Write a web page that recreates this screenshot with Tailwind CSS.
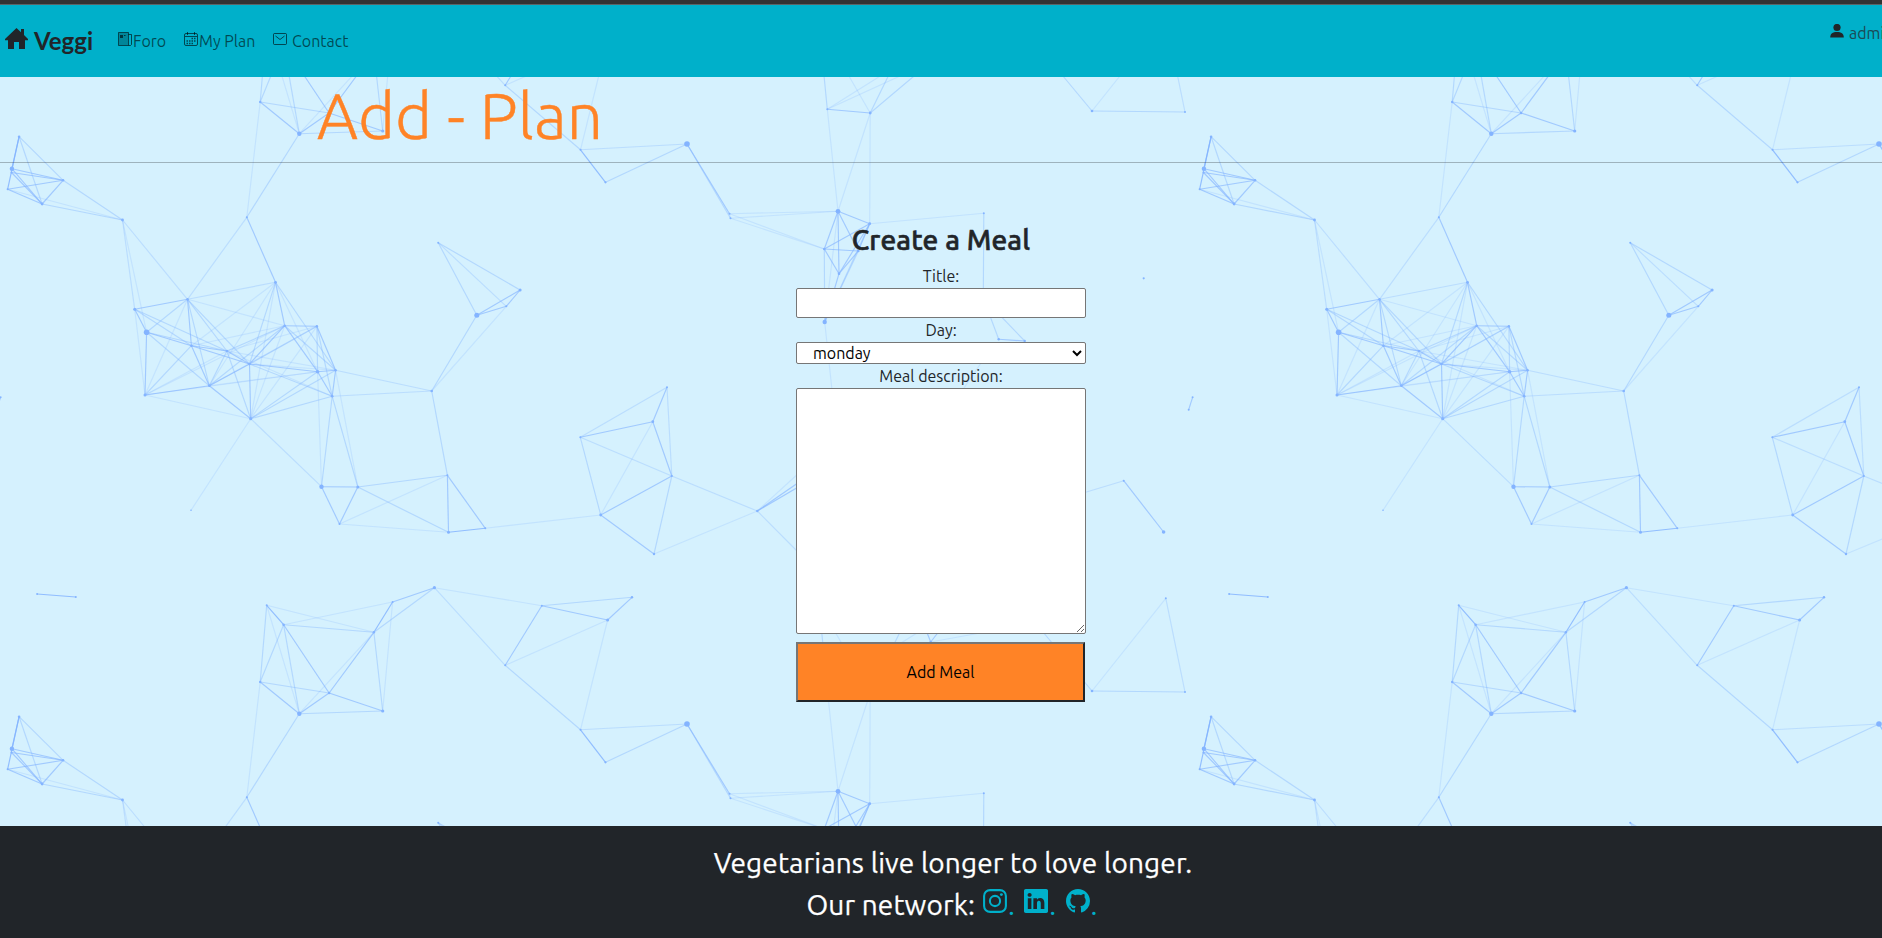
<!DOCTYPE html>
<html lang="en">
<head>
<meta charset="utf-8">
<title>Veggi</title>
<script src="https://cdn.jsdelivr.net/npm/@tailwindcss/browser@4"></script>
</head>
<body class="relative h-[938px] w-full overflow-hidden bg-[#d5f1fe] font-['Ubuntu','Open_Sans',sans-serif] text-base text-[#212529] flex flex-col">
  <!-- Decorative node network, tiled every 1192 x 580 -->
  <svg class="absolute inset-0 -z-10" width="1882" height="938" viewBox="0 0 1882 938" fill="none" stroke="#84b4ff" stroke-width="1.15">
    <g id="net"></g>
    <use href="#net" x="1192"/><use href="#net" y="-580"/><use href="#net" x="1192" y="-580"/>
    <use href="#net" x="-1192"/>
    <use href="#net" y="580"/><use href="#net" x="1192" y="580"/>
  </svg>

  <div class="h-[5px] shrink-0 border-b border-[#5c6466] bg-[#333]"></div>
  <nav class="flex h-[72px] shrink-0 items-start bg-[#00b0ca] pl-[5px] whitespace-nowrap">
    <a class="flex pt-[20px]">
      <svg class="mt-[3px]" width="23" height="21" viewBox="0 0 23 21" fill="#212529"><path d="M11.5 0 16 4.2V1h3v6L23 11v1.2h-3V21h-6v-7H9v7H3v-8.800H0V11z"/></svg>
      <span class="ml-[6px] w-[84px] font-['Lato',sans-serif] text-[24px] leading-[32px] font-bold">Veggi</span>
    </a>
    <a class="flex w-[66px] pt-[24px] leading-6 text-black/60">
      <svg class="mt-[3px] mr-[1px]" width="14" height="14" viewBox="0 0 14 14" fill="none" stroke="currentColor"><path d="M.5.5h10v13h-10zM10.500 2.500h3v10l-1 1h-2" /><path d="M1 1h9v12H1z" fill="currentColor" fill-opacity=".4" stroke="none"/><path d="M2 3h3v3H2zM6 3h1.500v1H6z" fill="currentColor" stroke="none"/></svg>
      <span>Foro</span>
    </a>
    <a class="flex w-[89px] pt-[24px] leading-6 text-black/60">
      <svg class="mt-[3px] mr-[1px]" width="14" height="14" viewBox="0 0 14 14" fill="none" stroke="currentColor"><rect x=".5" y="1.500" width="13" height="12" rx="1.500"/><path d="M1 4.500h12M3.500 0v3M10.500 0v3"/><path d="M7.500 6.500h4M2.500 9h9M2.500 11.500h6.500" stroke-width="1.500" stroke-dasharray="1.500 1"/></svg>
      <span>My Plan</span>
    </a>
    <a class="flex pt-[24px] leading-6 text-black/60">
      <svg class="mt-[4px] mr-[5px]" width="14" height="12" viewBox="0 0 14 12" fill="none" stroke="currentColor"><rect x=".5" y=".5" width="13" height="11" rx="1"/><path d="m2.500 3 4.500 3.500L11.500 3"/></svg>
      <span>Contact</span>
    </a>
    <a class="ml-auto flex pt-[16px] leading-6 text-[#1d4a54]">
      <svg class="mt-[3px] mr-[5px]" width="14" height="14" viewBox="0 0 14 14" fill="#212529"><circle cx="7" cy="3.500" r="3.600"/><path d="M.2 13.500c0-4 2.500-5.600 6.800-5.600s6.800 1.600 6.800 5.600z"/></svg>
      <span class="w-[33px]">admi</span>
    </a>
  </nav>

  <h1 class="h-[86px] shrink-0 border-b border-[#212529]/30 pl-[317px] text-[64px] leading-[77px] font-light tracking-[0.1px] text-[#ff8326] [-webkit-text-stroke:0.4px_#ff8326]">Add - Plan</h1>

  <main class="flex h-[663px] shrink-0 flex-col items-center pt-[60px]">
    <h3 class="mb-[7px] text-[28px] leading-[34px] font-medium tracking-[0.15px] [-webkit-text-stroke:0.6px_#212529]">Create a Meal</h3>
    <form class="flex w-[290px] flex-col text-center leading-6">
      <label>Title:</label>
      <input class="h-[30px] rounded-[2px] border border-[#767676] bg-white" type="text">
      <label>Day:</label>
      <select class="h-[22px] rounded-[2px] border border-[#767676] bg-white pl-[12px] text-left leading-5 text-black"><option>monday</option></select>
      <label>Meal description:</label>
      <textarea class="h-[246px] resize rounded-[2px] border border-[#767676] bg-white"></textarea>
      <button class="mt-2 h-[60px] w-[289px] border-2 border-t-[#767676] border-r-[#212529] border-b-[#212529] border-l-[#767676] bg-[#ff8326] text-black" type="button">Add Meal</button>
    </form>
  </main>

  <footer class="h-[112px] shrink-0 bg-[#212529] pt-[16px] pl-6 text-center text-[28px] leading-[42px] text-white">
    <p class="tracking-[0.13px] [-webkit-text-stroke:0.25px_#fff]">Vegetarians live longer to love longer.</p>
    <div class="flex justify-center">
      <span class="tracking-[0.13px] [-webkit-text-stroke:0.25px_#fff]">Our network:</span>
      <a class="ml-[8px] flex w-[41.300px] text-[#00b0ca]"><svg class="mt-[5px] mr-[1px]" width="24" height="24" viewBox="0 0 24 24" fill="none" stroke="currentColor" stroke-width="2.100"><rect x="1.100" y="1.100" width="21.800" height="21.800" rx="6"/><circle cx="12" cy="12" r="5.100"/><circle cx="18.400" cy="5.600" r="1.450" fill="currentColor" stroke="none"/></svg>.</a>
      <a class="flex w-[41.300px] text-[#00b0ca]"><svg class="mt-[5px] mr-[1px]" width="24" height="24" viewBox="0 0 16 16" fill="currentColor"><path d="M0 1.146C0 .513.526 0 1.175 0h13.650C15.474 0 16 .513 16 1.146v13.708c0 .633-.526 1.146-1.175 1.146H1.175C.526 16 0 15.487 0 14.854zm4.943 12.248V6.169H2.542v7.225zm-1.200-8.212c.837 0 1.358-.554 1.358-1.248-.015-.709-.520-1.248-1.342-1.248S2.400 3.226 2.400 3.934c0 .694.521 1.248 1.327 1.248zm4.908 8.212V9.359c0-.216.016-.432.080-.586.173-.431.568-.878 1.232-.878.869 0 1.216.662 1.216 1.634v3.865h2.401V9.250c0-2.220-1.184-3.252-2.764-3.252-1.274 0-1.845.7-2.165 1.193v.025h-.016l.016-.025V6.169h-2.400c.030.678 0 7.225 0 7.225z"/></svg>.</a>
      <a class="flex w-[34px] text-[#00b0ca]"><svg class="mt-[5px] mr-[1px]" width="24" height="24" viewBox="0 0 16 16" fill="currentColor"><path d="M8 0C3.580 0 0 3.580 0 8c0 3.540 2.290 6.530 5.470 7.590.4.070.55-.17.55-.38 0-.19-.01-.82-.01-1.490-2.010.37-2.530-.49-2.690-.94-.09-.23-.48-.94-.82-1.130-.28-.15-.68-.52-.01-.53.63-.01 1.080.58 1.230.82.72 1.210 1.870.87 2.330.66.07-.52.28-.87.51-1.070-1.780-.2-3.640-.89-3.640-3.950 0-.87.31-1.590.82-2.150-.08-.2-.36-1.020.08-2.120 0 0 .67-.21 2.200.82.64-.18 1.320-.27 2-.27s1.360.09 2 .27c1.530-1.040 2.200-.82 2.200-.82.44 1.100.16 1.920.08 2.120.51.56.82 1.270.82 2.150 0 3.070-1.870 3.750-3.650 3.950.29.25.54.73.54 1.480 0 1.070-.01 1.930-.01 2.200 0 .21.15.46.55.38A8.010 8.010 0 0 0 16 8c0-4.420-3.580-8-8-8"/></svg>.</a>
    </div>
  </footer>

<script>
// name: [x, y, dot radius]
const P = {
  A:[19.1,136.7,1.3],B:[11.9,168.7,2.2],B2:[11.5,172.5,1],C:[63.1,180.3,1.2],D:[7.6,189.3,1],E:[42.1,204,1.4],F:[122.5,220,1.4],G:[246.8,217.3,1],
  H:[260.2,682,1.2],I:[299.3,713.7,2.2],J:[329.1,693,1.2],K:[382.7,711,1.6],L:[266.7,605.3,1],M:[283.6,624.7,1.3],N:[373.9,632.3,1.2],O:[392.6,602,1],Pp:[434.4,587.7,1.6],
  Q:[541.8,605.7,1],R:[505.2,665.3,1],S:[580.5,729.8,1],G2:[246.8,797.3,0],
  a:[187.5,299.3,1.2],b:[134.7,309.3,1.5],c:[146.6,332.3,2.8],d:[275.5,282.3,1.4],e:[284.7,325.7,1.2],f:[316.9,326.3,1.2],g:[191.4,345.7,1.2],h:[226.9,351,1.2],i:[249.5,364,1.2],j:[145,395,1.5],k:[209.3,385.7,1.2],l:[317.6,371.7,1.8],m:[335.6,370.3,1.2],n:[332.2,396.3,1.3],o:[250.7,418.7,1.5],
  p:[431.7,391,1.3],q:[438.2,242.7,1],r:[520.1,290,1.5],s:[506.3,306.3,1],t:[476.8,315.3,2.5],u:[191,510.3,.8],v:[321.5,486.7,2.2],w:[357.8,487,1.5],x:[339.5,524,1],y:[447.4,475.3,1],z:[448.5,532.3,1.5],aa:[485.3,528.3,1],
  ba:[37.1,594,1],bb:[75.8,597,1],
  s1:[580.3,437.3,1],s2:[667,387.3,1],s3:[652.8,421.7,1.4],s4:[671.8,476,1.1],s5:[600.7,515,1.4],s6:[654,554,1.2],s7:[757.3,511,1.2],q2:[632,597.3,1.2],q3:[607.6,620,1.5],
  s8:[605.5,762.3,1.1],s9:[687,724,2.8],ta:[729.5,793.7,1],tb:[730.5,798.3,1],t2:[838,211.3,2.4],t2b:[838,791.3,0],t3:[869.7,223.7,1.4],t3b:[869.7,803.7,0],t5b:[824.3,829,0],
  t4:[983.8,213.3,1],t9:[983.3,298,0],t5:[824.3,249,1.3],t6:[839,273.7,1.3],t7:[858.3,251,1.3],t8:[824.7,322,2.2],xa:[998.7,339.3,1.2],xb:[1024.7,341,1.2],xc:[981,363,0],xd:[964,388,0],xe:[832,390,0],
  u1:[827.3,689.3,1],u2:[870.2,693,1.4],ua:[821.7,632,0],ub:[834,630,0],uc:[901,630,0],V:[930.7,642,1.2],va:[926,630,0],vb:[940,630,0],vc:[980,633,0],ud:[917,633,0],
  w1:[1043,632,0],w2:[1092,691,1.3],w3:[1185,692,1],w4:[1165.8,598.3,1],
  z1:[1123.7,480.7,1],z2:[1163.6,532,1.8],z3:[1060,500,0],n1:[1192.6,397.3,1],n2:[1188.7,409.7,1],n3:[1143.7,278.3,1.1],
  ya:[800,472,0],yb:[800,481.5,0],yc:[800,486,0],yd:[800,554,0]
};
// edges grouped by stroke opacity
const E = {
  '.85':'A-B L-M O-N A-D S-s8 ba-bb aa-z',
  '.65':'B-C B-E B2-E D-E C-E D-C B2-C v-x x-w v-w d-e e-f f-m m-n l-m c-g g-i e-l e-i i-l k-i j-k b-c g-h h-i t-s t-r r-s k-o i-o Pp-O H-I I-J J-N J-K Q-R Q-q3 q2-q3 y-z y-aa s9-ta s2-s3 s3-s4 s1-s3 s5-s6 s5-s4 t2-t3 t2-t7 t2-t6 t5-t6 t5-t3 t5-t7 t3-t7 t3-t6 t7-t6 t6-t8 z1-z2 n1-n2 u1-u2 V-va V-vb s7-yb s7-yc xa-xb J-M G-d l-n a-b a-g c-j g-k t2-t5',
  '.42':'A-C A-E C-F E-F a-c a-k a-h a-i b-g b-h c-k c-h g-j d-m d-i e-m e-h e-k f-l f-n f-i h-k h-o i-n l-o m-o n-o n-v n-w p-y p-t q-r q-t w-y w-z H-J L-H M-H M-N M-I Pp-N K-N K-I R-S Q-q2 s9-s8 s9-tb s1-s5 s4-s6 t5-t8 t3-t8 t7-t8 t4-t9 t9-xa t9-xb w1-w2 w2-w3 u1-ua u2-uc u2-V I-G2',
  '.32':'F-b F-a a-d m-p n-p n-j o-v q-s s9-S s1-s2 s1-s4 s2-s4 s4-s7 s7-yd w3-w4 G-a z1-z3 Pp-R',
  '.23':'D-F F-c H-G2 a-j a-e d-g d-k d-o d-l G-e e-g e-j e-o f-h f-k f-o h-n b-j i-m k-l j-l j-h j-o h-m m-w l-v p-s o-u x-y x-z aa-s5 L-N L-I M-O O-K N-I Pp-Q R-q3 q3-S s3-s5 s6-s7 s7-ya ta-t2b tb-t2b ta-t5b tb-t5b ta-tb t2-t8 t3-t4 t8-xe xc-xd w2-w4 u2-ub u1-V u1-ud V-vc u1-t2b u2-t2b u2-t3b'
};
// pairs left out of the drawing
const skip = new Set(['n-j', 'G-e']);
let out = '';
for (const [o, list] of Object.entries(E)) {
  for (const e of list.split(' ')) {
    if (skip.has(e)) continue;
    const [m, n] = e.split('-');
    out += `<path d="M${P[m][0]} ${P[m][1]}L${P[n][0]} ${P[n][1]}" stroke-opacity="${o}"/>`;
  }
}
for (const [x, y, r] of Object.values(P)) if (r) out += `<circle cx="${x}" cy="${y}" r="${r}" fill="#84b4ff" stroke="none"/>`;
document.getElementById('net').innerHTML = out;
</script>
</body>
</html>
